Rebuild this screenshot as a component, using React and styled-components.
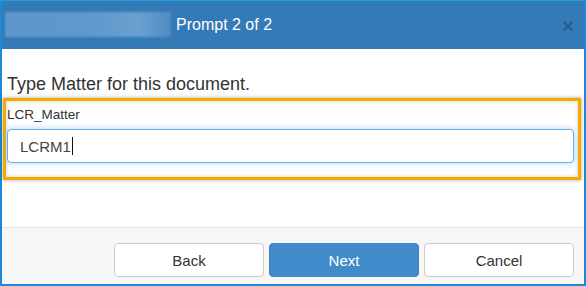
import React from 'react';
import styled, { createGlobalStyle } from 'styled-components';

const GlobalStyle = createGlobalStyle`
  html, body {
    margin: 0;
    padding: 0;
    background: #fff;
  }
  * {
    box-sizing: border-box;
  }
`;

const Window = styled.div`
  width: 586px;
  height: 286px;
  display: flex;
  flex-direction: column;
  border-left: 2px solid #1b8ad3;
  border-right: 2px solid #1b8ad3;
  border-top: 1px solid #19a0e3;
  border-bottom: 2px solid #1b8ad3;
  font-family: Arial, 'Liberation Sans', sans-serif;
  color: #333;
  background: #fff;
`;

const Header = styled.div`
  height: 48px;
  flex: none;
  display: flex;
  align-items: center;
  background: #337ab7;
  padding: 0 10px 0 3px;
`;

const Redacted = styled.div`
  width: 166px;
  height: 25px;
  margin-top: -1px;
  background: linear-gradient(90deg, #5d97cb 0%, #6099cc 55%, #6aa0d0 80%, #4f8cc3 100%);
  filter: blur(0.8px);
`;

const Title = styled.span`
  margin-left: 5px;
  color: #fff;
  font-size: 16px;
`;

const Close = styled.span`
  margin-left: auto;
  font-size: 21px;
  font-weight: bold;
  line-height: 1;
  color: #000;
  opacity: 0.22;
`;

const Body = styled.div`
  flex: 1;
  padding: 24px 1px 0 1px;
`;

const Prompt = styled.div`
  padding-left: 4px;
  font-size: 18px;
  line-height: 22px;
  color: #333;
`;

const Highlight = styled.div`
  margin-top: 3px;
  width: 578px;
  border: 3px solid #f7a900;
  box-shadow: 0 0 4px rgba(0, 0, 0, 0.35), inset 0 0 4px rgba(0, 0, 0, 0.2);
  padding: 5px 4px 14px 1px;
`;

const Label = styled.div`
  font-size: 13.5px;
  line-height: 17px;
  color: #333;
  margin-bottom: 6px;
`;

const Field = styled.div`
  height: 34px;
  display: flex;
  align-items: center;
  padding-left: 12px;
  border: 1px solid #66afe9;
  border-radius: 4px;
  box-shadow: 0 0 6px rgba(102, 175, 233, 0.55);
  font-size: 15px;
  color: #444;
  background: #fff;
`;

const Caret = styled.span`
  display: inline-block;
  width: 1px;
  height: 18px;
  margin-left: 1px;
  background: #111;
`;

const Footer = styled.div`
  height: 57px;
  flex: none;
  display: flex;
  justify-content: flex-end;
  align-items: flex-start;
  gap: 5px;
  padding: 15px 10px 0 0;
  border-top: 1px solid #e5e5e5;
  background: #f7f7f7;
`;

const Button = styled.button`
  width: 150px;
  height: 34px;
  border-radius: 4px;
  font-family: Arial, 'Liberation Sans', sans-serif;
  font-size: 15px;
  border: 1px solid ${(p) => (p.$primary ? '#3d87c6' : '#ccc')};
  background: ${(p) => (p.$primary ? '#428bca' : '#fff')};
  color: ${(p) => (p.$primary ? '#fff' : '#333')};
  padding: 0;
`;

export default function App() {
  return (
    <>
      <GlobalStyle />
      <Window>
        <Header>
          <Redacted />
          <Title>Prompt 2 of 2</Title>
          <Close>×</Close>
        </Header>
        <Body>
          <Prompt>Type Matter for this document.</Prompt>
          <Highlight>
            <Label>LCR_Matter</Label>
            <Field>
              LCRM1
              <Caret />
            </Field>
          </Highlight>
        </Body>
        <Footer>
          <Button>Back</Button>
          <Button $primary>Next</Button>
          <Button>Cancel</Button>
        </Footer>
      </Window>
    </>
  );
}
